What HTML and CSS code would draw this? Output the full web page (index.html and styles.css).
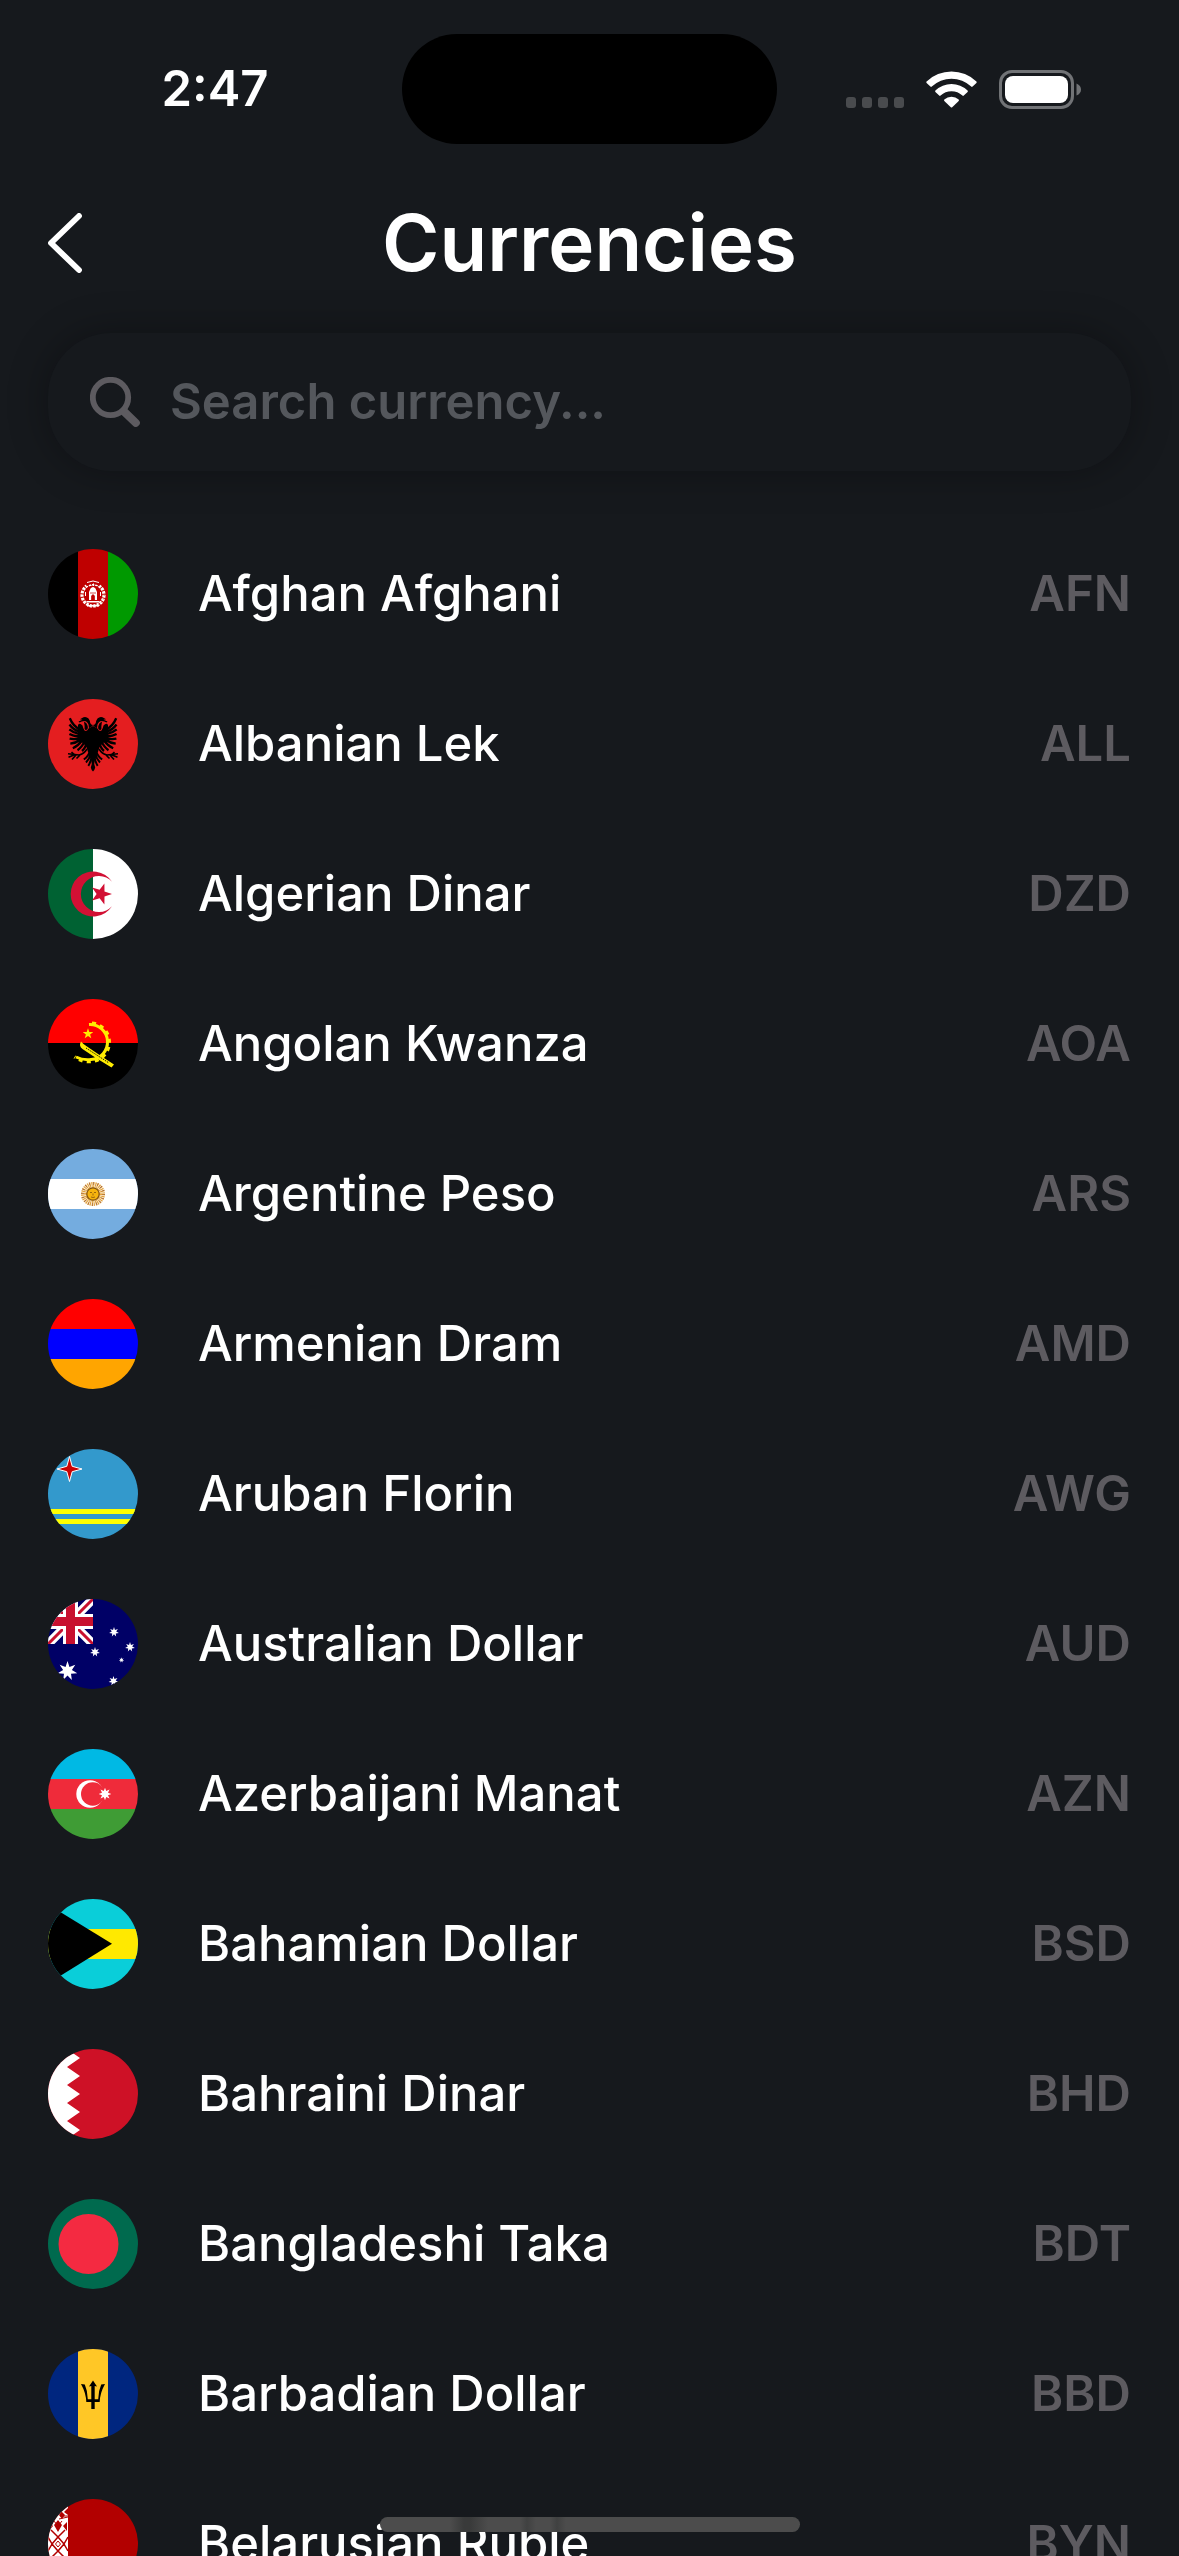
FILE: index.html
```html
<!DOCTYPE html>
<html lang="en">
<head>
<meta charset="utf-8">
<meta name="viewport" content="width=device-width, initial-scale=1">
<title>Currencies</title>
<link rel="stylesheet" href="styles.css">
</head>
<body>
<div class="app">
  <div class="status">
    <time class="status-time">2:47</time>
    <div class="island"></div>
    <div class="status-icons">
      <svg class="signal" viewBox="0 0 58 38" aria-hidden="true"><g fill="#494b4e"><rect x="0" y="27" width="10" height="11" rx="3"/><rect x="16" y="27" width="10" height="11" rx="3"/><rect x="32" y="27" width="10" height="11" rx="3"/><rect x="48" y="27" width="10" height="11" rx="3"/></g></svg>
      <svg class="wifi" viewBox="0 0 51 38" aria-hidden="true"><g fill="#fff"><path d="M0.600 11.500A36 36 0 0 1 50.400 11.500Q51 12.200 50.400 12.900L46.600 16.600Q45.900 17.200 45.200 16.600A28.500 28.500 0 0 0 5.800 16.600Q5.100 17.200 4.400 16.600L.6 12.900Q0 12.200.6 11.500Z"/><path d="M9.400 20.500A23.500 23.500 0 0 1 41.600 20.500Q42.200 21.200 41.600 21.900L37.800 25.600Q37.100 26.200 36.400 25.600A16 16 0 0 0 14.600 25.600Q13.900 26.200 13.200 25.600L9.400 21.900Q8.800 21.200 9.400 20.500Z"/><path d="M18.300 29.600A10.800 10.800 0 0 1 32.700 29.600Q33.300 30.300 32.700 31L26.200 37.300Q25.500 37.900 24.800 37.300L18.300 31Q17.700 30.300 18.300 29.600Z"/></g></svg>
      <svg class="battery" viewBox="0 0 82 39" aria-hidden="true"><rect x="1.500" y="1.500" width="72" height="36" rx="11.500" fill="none" stroke="#717376" stroke-width="3"/><rect x="6" y="6" width="63" height="27" rx="8" fill="#fff"/><path d="M77.500 13.500Q82 15.500 82 19.500T77.500 25.500Z" fill="#717376"/></svg>
    </div>
  </div>

  <header class="header">
    <button class="back" type="button" aria-label="Back"><svg viewBox="0 0 34 60" aria-hidden="true"><path d="M31 3L3 30L31 57" fill="none" stroke="#fff" stroke-width="5.800" stroke-linecap="round" stroke-linejoin="round"/></svg></button>
    <h1 class="title">Currencies</h1>
  </header>

  <label class="search">
    <svg viewBox="0 0 50 50" aria-hidden="true"><g fill="none" stroke="#5d5b60" stroke-linecap="round"><circle cx="20.500" cy="20.500" r="17.700" stroke-width="5.800"/><path d="M34.500 35L45.800 45.800" stroke-width="8"/></g></svg>
    <input class="search-input" type="search" placeholder="Search currency..." aria-label="Search currency">
  </label>

  <ul class="list">
    <li class="row">
      <svg class="flag" viewBox="0 0 90 90" aria-hidden="true"><path d="M0 0h30v90H0z" fill="#000"/><path d="M30 0h30v90H30z" fill="#bf0000"/><path d="M60 0h30v90H60z" fill="#009900"/><circle cx="45" cy="46" r="11" fill="none" stroke="#fff" stroke-width="3.200" stroke-dasharray="2.600 1"/><circle cx="45" cy="46" r="11.200" fill="none" stroke="#bf5a30" stroke-width=".8" stroke-dasharray="1 2.600"/><path d="M38 36q7-5 14 0" stroke="#bf0000" stroke-width="3" fill="none"/><path d="M39 33.500q6-3 12 0M41.500 36.500h2m2-2v2.500m2-.5h2" stroke="#fff" stroke-width="1" fill="none"/><path d="M41 51v-8l1.500-3.500q2.500-3 5 0L49 43v8zM38.500 52h13v1.600h-13zM37 43h1v4h-1zM52 43h1v4h-1zM39 56h12v1.500H39z" fill="#fff"/><path d="M43.500 51v-4q1.500-3 3 0v4zM42 44h6" fill="#bf0000" stroke="#bf0000" stroke-width=".7"/></svg>
      <span class="name">Afghan Afghani</span><span class="code">AFN</span>
    </li>
    <li class="row">
      <svg class="flag" viewBox="0 0 90 90" aria-hidden="true"><path d="M0 0h90v90H0z" fill="#e41e20"/><g id="eagle-half"><path d="M45 26Q42.500 29.500 41 29L40.500 25.500Q39 22 36.500 22Q33.500 22.300 31.500 23.400L30.500 22.600L34.500 20.800L32 20.200L35.500 18.200Q38.500 17.400 40.500 19.500Q42 21.500 42.200 24Q43 26 45 26ZM36 22.500Q39 23.500 39.700 27Q40.500 31 37.500 31Q36.200 30 36.600 27Z"/><path d="M45 27L40.500 29.500Q39 33 36.500 31.500Q35 29 34.500 26.500Q31.500 23.500 30 26L29.500 40Q32 43 35 44L38.500 48L40 53L45 59Z"/><path d="M32 30.500Q25 27 21.800 19.200M31 32.500Q25 30.500 21.500 25.500M31 35Q25 33.500 21.300 30.300M31 37.500Q25 37 21.400 35M31 39.500Q26 40.500 21.600 39.600M32 41Q28 44 22.300 44.700M34 41.500Q30 47 24.800 49.200M37 42Q33.500 48.500 29.500 51.200M39.500 43Q37 49.500 34 52" fill="none" stroke="#000" stroke-width="2.300"/><path d="M39 50Q36 55 31 56L20 54.800M27 55.600L20.500 58.200M28 56L24 60.500M33 55L28.500 59.500M26 55.300L23.500 53" fill="none" stroke="#000" stroke-width="1.600"/><path d="M42 52Q40 58 35.800 60.300M43 54Q41.500 60 38 63.500M44 55Q43 63 40.300 66.800" fill="none" stroke="#000" stroke-width="2"/><path d="M45 50L42.500 58L43.800 65L42.800 68.500Q43.200 70.800 45 72.500Z"/></g><use href="#eagle-half" transform="matrix(-1 0 0 1 90 0)"/></svg>
      <span class="name">Albanian Lek</span><span class="code">ALL</span>
    </li>
    <li class="row">
      <svg class="flag" viewBox="0 0 90 90" aria-hidden="true"><path d="M0 0h45v90H0z" fill="#006233"/><path d="M45 0h45v90H45z" fill="#fff"/><path d="M64 32.700A22.500 22.500 0 1 0 64 57.300A18 18 0 1 1 64 32.700ZM64 45l-7.500 2.600-.1 7.900-4.800-6.300-7.500 2.300 4.500-6.500-4.500-6.500 7.500 2.300 4.800-6.300.1 7.900z" fill="#d21034"/></svg>
      <span class="name">Algerian Dinar</span><span class="code">DZD</span>
    </li>
    <li class="row">
      <svg class="flag" viewBox="0 0 90 90" aria-hidden="true"><path d="M0 0h90v44H0z" fill="#f00"/><path d="M0 44h90v46H0z" fill="#000"/><g fill="none" stroke="#ffec00"><path d="M41 25.500A17.500 17.500 0 0 1 43 60.500Q35 61.500 28 58" stroke-width="3"/><path d="M41 24A19.200 19.200 0 0 1 43 62.500Q35 63.500 26.500 58" stroke-width="3.400" stroke-dasharray="4 4.200" stroke-dashoffset="-3"/></g><path d="M40 29.300l1.300 3.700 4 .1-3.200 2.400 1.200 3.800-3.300-2.300-3.300 2.300 1.200-3.800-3.200-2.400 4-.1z" fill="#ffec00"/><path d="M33 42.500Q35.500 45.500 39 47.500L53 57L66 65.500L63.500 68.500L48 59L34.500 50Q30.500 47 33 42.500Z" fill="#ffec00"/><path d="M38 49L61 64" stroke="#000" stroke-width=".9" stroke-dasharray="1.500 1"/></svg>
      <span class="name">Angolan Kwanza</span><span class="code">AOA</span>
    </li>
    <li class="row">
      <svg class="flag" viewBox="0 0 90 90" aria-hidden="true"><path d="M0 0h90v90H0z" fill="#74acdf"/><path d="M0 30h90v30H0z" fill="#fff"/><circle cx="45" cy="45" r="9" fill="none" stroke="#e2a13b" stroke-width="6" stroke-dasharray="1.100 .667"/><circle cx="45" cy="45" r="10.500" fill="none" stroke="#a4663a" stroke-width="3" stroke-dasharray=".7 3.423"/><circle cx="45" cy="45" r="6.200" fill="#f6b40e" stroke="#85540d" stroke-width="1.300"/><path d="M42 43.500h2m2 0h2M43 48q2 1 4 0M45 44.500v2" stroke="#85540d" stroke-width=".8" fill="none"/></svg>
      <span class="name">Argentine Peso</span><span class="code">ARS</span>
    </li>
    <li class="row">
      <svg class="flag" viewBox="0 0 90 90" aria-hidden="true"><path d="M0 0h90v30H0z" fill="#f00"/><path d="M0 30h90v30H0z" fill="#00f"/><path d="M0 60h90v30H0z" fill="#ffa500"/></svg>
      <span class="name">Armenian Dram</span><span class="code">AMD</span>
    </li>
    <li class="row">
      <svg class="flag" viewBox="0 0 90 90" aria-hidden="true"><path d="M0 0h90v90H0z" fill="#39c"/><path d="M0 60h90v5H0zM0 70h90v5H0z" fill="#ff0"/><path d="M21.500 7.500L24.200 17.300L34 20L24.200 22.700L21.500 32.500L18.800 22.700L9 20L18.800 17.300Z" fill="#c00" stroke="#fff" stroke-width="1"/></svg>
      <span class="name">Aruban Florin</span><span class="code">AWG</span>
    </li>
    <li class="row">
      <svg class="flag" viewBox="0 0 90 90" aria-hidden="true"><path d="M0 0h90v90H0z" fill="#006"/><svg width="45" height="45" viewBox="0 0 45 45"><path d="M0 0L45 45M45 0L0 45" stroke="#fff" stroke-width="9"/><path d="M0 0L45 45M45 0L0 45" stroke="#c8102e" stroke-width="3"/><path d="M22.500 0v45M0 22.500h45" stroke="#fff" stroke-width="15"/><path d="M22.500 0v45M0 22.500h45" stroke="#c8102e" stroke-width="9"/></svg><defs><path id="star7" d="M0-10L1.950-4.050L7.820-6.230L4.380-1L9.750 2.230L3.510 2.800L4.340 9.010L0 4.500L-4.340 9.010L-3.510 2.800L-9.750 2.230L-4.380-1L-7.820-6.230L-1.950-4.050Z" fill="#fff"/></defs><use href="#star7" x="19.500" y="72"/><use href="#star7" transform="translate(66 33) scale(.5)"/><use href="#star7" transform="translate(82 48) scale(.5)"/><use href="#star7" transform="translate(47 53) scale(.5)"/><use href="#star7" transform="translate(65.500 82) scale(.5)"/><use href="#star7" transform="translate(73.500 61) scale(.27)"/></svg>
      <span class="name">Australian Dollar</span><span class="code">AUD</span>
    </li>
    <li class="row">
      <svg class="flag" viewBox="0 0 90 90" aria-hidden="true"><path d="M0 0h90v30H0z" fill="#00b9e4"/><path d="M0 30h90v30H0z" fill="#ef2b3a"/><path d="M0 60h90v30H0z" fill="#3f9c35"/><circle cx="42" cy="45" r="13.700" fill="#fff"/><circle cx="44.800" cy="45" r="11.800" fill="#ef2b3a"/><path d="M57 38.700l1.200 3.400 3.300-1.500-1.500 3.200 3.400 1.200-3.400 1.200 1.500 3.300-3.300-1.500-1.200 3.300-1.200-3.300-3.300 1.500 1.500-3.300-3.400-1.200 3.400-1.200-1.500-3.200 3.300 1.500z" fill="#fff"/></svg>
      <span class="name">Azerbaijani Manat</span><span class="code">AZN</span>
    </li>
    <li class="row">
      <svg class="flag" viewBox="0 0 90 90" aria-hidden="true"><path d="M0 0h90v90H0z" fill="#0aced9"/><path d="M0 30h90v30H0z" fill="#ffe900"/><path d="M-9 0L64 44.700L-9 90Z" fill="#000"/></svg>
      <span class="name">Bahamian Dollar</span><span class="code">BSD</span>
    </li>
    <li class="row">
      <svg class="flag" viewBox="0 0 90 90" aria-hidden="true"><path d="M0 0h90v90H0z" fill="#ce1126"/><path d="M0 0H19L32 9L19 18L32 27L19 36L32 45L19 54L32 63L19 72L32 81L19 90H0Z" fill="#fff"/></svg>
      <span class="name">Bahraini Dinar</span><span class="code">BHD</span>
    </li>
    <li class="row">
      <svg class="flag" viewBox="0 0 90 90" aria-hidden="true"><path d="M0 0h90v90H0z" fill="#006a4e"/><circle cx="40.500" cy="45" r="30" fill="#f42a41"/></svg>
      <span class="name">Bangladeshi Taka</span><span class="code">BDT</span>
    </li>
    <li class="row">
      <svg class="flag" viewBox="0 0 90 90" aria-hidden="true"><path d="M0 0h90v90H0z" fill="#00267f"/><path d="M30 0h30v90H30z" fill="#ffc726"/><g id="trident-half"><path d="M45 31.500L41 37.500L43.300 37V50.200H39.800Q39.700 42 36.800 35.500L33 35Q38 44 38.300 53H43.300V60H45.200Z"/></g><use href="#trident-half" transform="matrix(-1 0 0 1 90 0)"/></svg>
      <span class="name">Barbadian Dollar</span><span class="code">BBD</span>
    </li>
    <li class="row">
      <svg class="flag" viewBox="0 0 90 90" aria-hidden="true"><path d="M0 0h90v90H0z" fill="#b20000"/><path d="M0 0h20v90H0z" fill="#fff"/><g fill="none" stroke="#b20000"><path d="M10 38L16 45L10 52L4 45ZM3 31L10 38L17 31M3 59L10 52L17 59M0 38L4 45L0 52M20 38L16 45L20 52" stroke-width="1.500"/><path d="M10 42L12.500 45L10 48L7.500 45Z" stroke-width="1"/></g><path d="M10 21l4 5-4 7-4-7zM1 23l4 4-4 5zM19 23l-4 4 4 5zM13 12l4 4-3 4-3-4zM20 9l-4 4 4 3zM3 17h3v3H3z" fill="#b20000"/><path d="M6 22l4 5 4-5M11 20l9-2M12 17h8" stroke="#b20000" fill="none"/></svg>
      <span class="name">Belarusian Ruble</span><span class="code">BYN</span>
    </li>
  </ul>
  <div class="home-bar"></div>
</div>
</body>
</html>
```
FILE: styles.css
```css
* {
  box-sizing: border-box;
}

body {
  margin: 0;
  background: #16191d;
  color: #fff;
  font-family: Inter, "Liberation Sans", sans-serif;
}

.app {
  position: relative;
  display: flex;
  flex-direction: column;
  height: 100vh;
  overflow: hidden;
}

.status {
  display: grid;
  grid-template-columns: 1fr 375px 1fr;
  align-items: center;
  flex: none;
  padding-top: 34px;
}

.status-time {
  padding-left: 28px;
  font-size: 49px;
  font-weight: 600;
  line-height: 60px;
  text-align: center;
}

.island {
  height: 110px;
  border-radius: 55px;
  background: #000;
}

.status-icons {
  display: flex;
  align-items: center;
  justify-content: flex-end;
  gap: 22px;
  padding-right: 98px;
}

.signal {
  width: 58px;
  height: 38px;
}

.wifi {
  width: 51px;
  height: 38px;
}

.battery {
  width: 82px;
  height: 39px;
}

.header {
  display: grid;
  grid-template-columns: 96px 1fr 96px;
  align-items: center;
  flex: none;
  padding: 47px 48px 0;
}

.back {
  display: flex;
  padding: 0;
  border: 0;
  background: none;
}

.back svg {
  width: 34px;
  height: 60px;
}

.title {
  margin: 0;
  font-size: 78px;
  font-weight: 600;
  line-height: 104px;
  text-align: center;
}

.search {
  display: flex;
  align-items: center;
  flex: none;
  gap: 30px;
  height: 138px;
  margin: 38px 48px 48px;
  padding: 0 42px;
  border-radius: 63px;
  background: #16191d;
  box-shadow: 0 0 40px rgb(0 0 0 / 32%);
}

.search svg {
  flex: none;
  width: 50px;
  height: 50px;
}

.search-input {
  flex: 1;
  min-width: 0;
  padding: 0;
  border: 0;
  outline: 0;
  background: none;
  color: #fff;
  font-family: inherit;
  font-size: 49px;
  font-weight: 600;
  line-height: 60px;
}

.search-input::placeholder {
  color: #54575c;
  opacity: 1;
}

.list {
  flex: 1;
  min-height: 0;
  margin: 0;
  padding: 0 48px;
  overflow-y: auto;
  list-style: none;
  scrollbar-width: none;
}

.row {
  display: flex;
  align-items: center;
  height: 150px;
}

.flag {
  flex: none;
  width: 90px;
  height: 90px;
  margin-right: 60px;
  border-radius: 50%;
}

.name {
  flex: 1;
  font-size: 49px;
  font-weight: 500;
  line-height: 60px;
}

.code {
  color: #5d5b60;
  font-size: 49px;
  font-weight: 600;
  line-height: 60px;
}

.home-bar {
  position: absolute;
  bottom: 24px;
  left: 50%;
  width: 420px;
  height: 15px;
  border-radius: 8px;
  background: linear-gradient(90deg, #4c4c4c 70px, #393a3a 84px, #393a3a 90px, #4c4c4c 108px, #4c4c4c 140px, #404141 147px, #4c4c4c 156px, #4c4c4c 170px, #404141 177px, #4c4c4c 186px);
  transform: translateX(-50%);
}
```
